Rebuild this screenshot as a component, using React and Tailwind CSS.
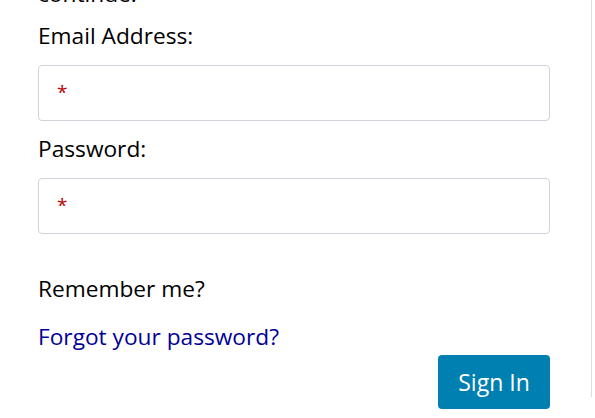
import React from 'react';

export default function App() {
    return (
        <div className="h-[418px] w-[595px] overflow-hidden bg-white">
            <div className="h-full w-[592px] border-r border-[#dddddd] pl-[38px] pr-[41px] font-['Open_Sans',sans-serif] text-[22.7px] leading-[30px] text-black">
                <p className="mt-[-21px] mb-[12px]">continue.</p>

                <label className="block mb-[13.5px]">Email Address:</label>
                <div className="h-[56px] mb-[13.5px] flex items-center rounded-[4px] border border-[#ced4da] pl-[18px]">
                    <span className="text-[19px] leading-none text-[#c00000]">*</span>
                </div>

                <label className="block mb-[13.5px]">Password:</label>
                <div className="h-[56px] flex items-center rounded-[4px] border border-[#ced4da] pl-[18px]">
                    <span className="text-[19px] leading-none text-[#c00000]">*</span>
                </div>

                <p className="mt-[40.5px] mb-[18px]">Remember me?</p>
                <a href="#" className="block text-[#000099]">Forgot your password?</a>

                <div className="flex justify-end mt-[2.5px]">
                    <button className="h-[54px] w-[112px] rounded-[4px] bg-[#0080b0] text-white text-[23px]">
                        Sign In
                    </button>
                </div>
            </div>
        </div>
    );
}
